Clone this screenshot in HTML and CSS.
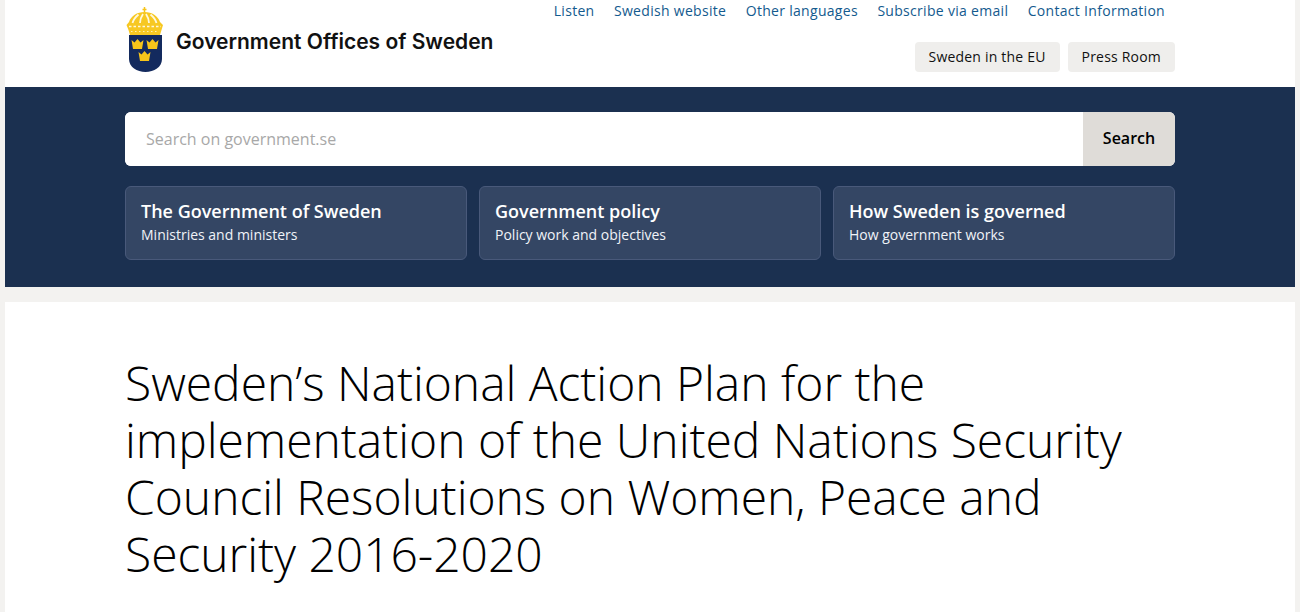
FILE: index.html
```html
<!DOCTYPE html>
<html lang="en">
<head>
<meta charset="utf-8">
<title>Sweden's National Action Plan</title>
<link rel="stylesheet" href="styles.css">
</head>
<body>
<header class="top">
  <div class="wrap top-row">
    <a class="brand" href="#">
      <svg class="crest" width="38" height="65" viewBox="0 0 38 65" aria-hidden="true">
        <path d="M18.500 0v6M16.500 2.500h4" stroke="#f6c41a" stroke-width="1.500" fill="none"/>
        <path d="M3 15C5 9 11 5 18.500 5S32 9 34 15l3 3-1.500 5-1.500 5H4l-1.500-5L.5 18z" fill="#f7c822"/>
        <path d="M6.500 16c1-4 3-6 6-8.500M14 16c0-4 1-6 3-9M23 16c0-4-1-6-3-9M30.500 16c-1-4-3-6-6-8.500" stroke="#fff8dc" stroke-width="1.800" fill="none"/>
        <path d="M3 19.500h32" stroke="#fff8dc" stroke-width="1.600" stroke-dasharray="2.500 2"/>
        <path d="M5 24.500h28" stroke="#fff1b0" stroke-width="1" stroke-dasharray="1.500 2.500"/>
        <path d="M3 28h33v24c0 8-8 13-16.500 13S3 60 3 52z" fill="#132a5e"/>
        <g fill="#f6c41a">
          <path d="M5.500 33l3 2.500L11.500 32l3 3.500 3-2.500-1.500 9H7z"/>
          <path d="M20.500 33l3 2.500 3-3.500 3 3.500 3-2.500-1.500 9h-9z"/>
          <path d="M12.500 45l3 2.500 3-3.500 3 3.500 3-2.500-1.500 9h-9z"/>
        </g>
      </svg>
      <span class="brand-name">Government Offices of Sweden</span>
    </a>
    <div class="tools">
      <nav class="links">
        <a href="#">Listen</a>
        <a href="#">Swedish website</a>
        <a href="#">Other languages</a>
        <a href="#">Subscribe via email</a>
        <a href="#">Contact Information</a>
      </nav>
      <div class="pills">
        <a class="pill" href="#">Sweden in the EU</a>
        <a class="pill" href="#">Press Room</a>
      </div>
    </div>
  </div>
</header>
<section class="band">
  <div class="wrap">
    <form class="search">
      <input class="search-input" type="text" placeholder="Search on government.se">
      <button class="search-btn" type="button">Search</button>
    </form>
    <nav class="cards">
      <a class="card" href="#"><strong>The Government of Sweden</strong><span>Ministries and ministers</span></a>
      <a class="card" href="#"><strong>Government policy</strong><span>Policy work and objectives</span></a>
      <a class="card" href="#"><strong>How Sweden is governed</strong><span>How government works</span></a>
    </nav>
  </div>
</section>
<main class="content">
  <div class="wrap">
    <h1>Sweden’s National Action Plan for the implementation of the United Nations Security Council Resolutions on Women, Peace and Security 2016-2020</h1>
  </div>
</main>
</body>
</html>
```
FILE: styles.css
```css
* { box-sizing: border-box; }
html, body { height: 100%; }
body {
  margin: 0;
  padding: 0 5px;
  background: #f3f2f0;
  font-family: "Open Sans", "Noto Sans", sans-serif;
  color: #000;
  overflow: hidden;
}
a { text-decoration: none; color: inherit; }
.wrap { width: 1050px; margin: 0 0 0 120px; }
.top { background: #fff; height: 87px; }
.top-row { display: flex; justify-content: space-between; }
.brand { display: flex; align-items: flex-start; padding-top: 7px; margin-left: 1px; }
.crest { display: block; flex: none; }
.brand-name {
  margin: 21px 0 0 12px;
  font-family: Inter, "Liberation Sans", sans-serif;
  font-weight: 600;
  font-size: 21px;
  line-height: 27px;
  color: #111;
  white-space: nowrap;
}
.tools { display: flex; flex-direction: column; align-items: flex-end; }
.links { display: flex; gap: 19.5px; padding-right: 10px; font-size: 14px; line-height: 22px; letter-spacing: 0.3px; color: #135a8e; }
.pills { display: flex; gap: 8px; margin-top: 20px; }
.pill {
  display: block;
  height: 30px;
  padding: 0 14px;
  border-radius: 4px;
  background: #efeeec;
  font-size: 14px;
  line-height: 30px;
  letter-spacing: 0.2px;
  color: #111;
}
.band { background: #1b3050; height: 200px; padding-top: 25px; }
.search { display: flex; height: 54px; border-radius: 6px; overflow: hidden; background: #fff; }
.search-input {
  flex: 1;
  min-width: 0;
  border: 0;
  outline: 0;
  padding: 0 21px;
  font: 16px "Open Sans", sans-serif;
  color: #111;
  background: #fff;
}
.search-input::placeholder { color: #a8a8a8; opacity: 1; }
.search-btn {
  width: 92px;
  border: 0;
  padding: 0 0 2px;
  background: #dfdcd8;
  font: 600 16px "Open Sans", sans-serif;
  color: #000;
}
.cards { display: grid; grid-template-columns: repeat(3, 342px); gap: 12px; margin-top: 20px; }
.card {
  display: flex;
  flex-direction: column;
  height: 74px;
  padding: 12px 15px 0;
  border: 1px solid #49597a;
  border-radius: 6px;
  background: #344664;
  color: #fff;
}
.card strong { font-size: 18px; font-weight: 600; line-height: 24px; }
.card span { margin-top: 1px; font-size: 14px; line-height: 22px; color: #f0f3f8; }
.content { background: #fff; margin-top: 15px; min-height: 320px; padding-top: 52px; }
h1 {
  margin: 0;
  font-weight: 300;
  font-size: 48px;
  line-height: 57px;
  letter-spacing: -0.04px;
  color: #000;
}
```
